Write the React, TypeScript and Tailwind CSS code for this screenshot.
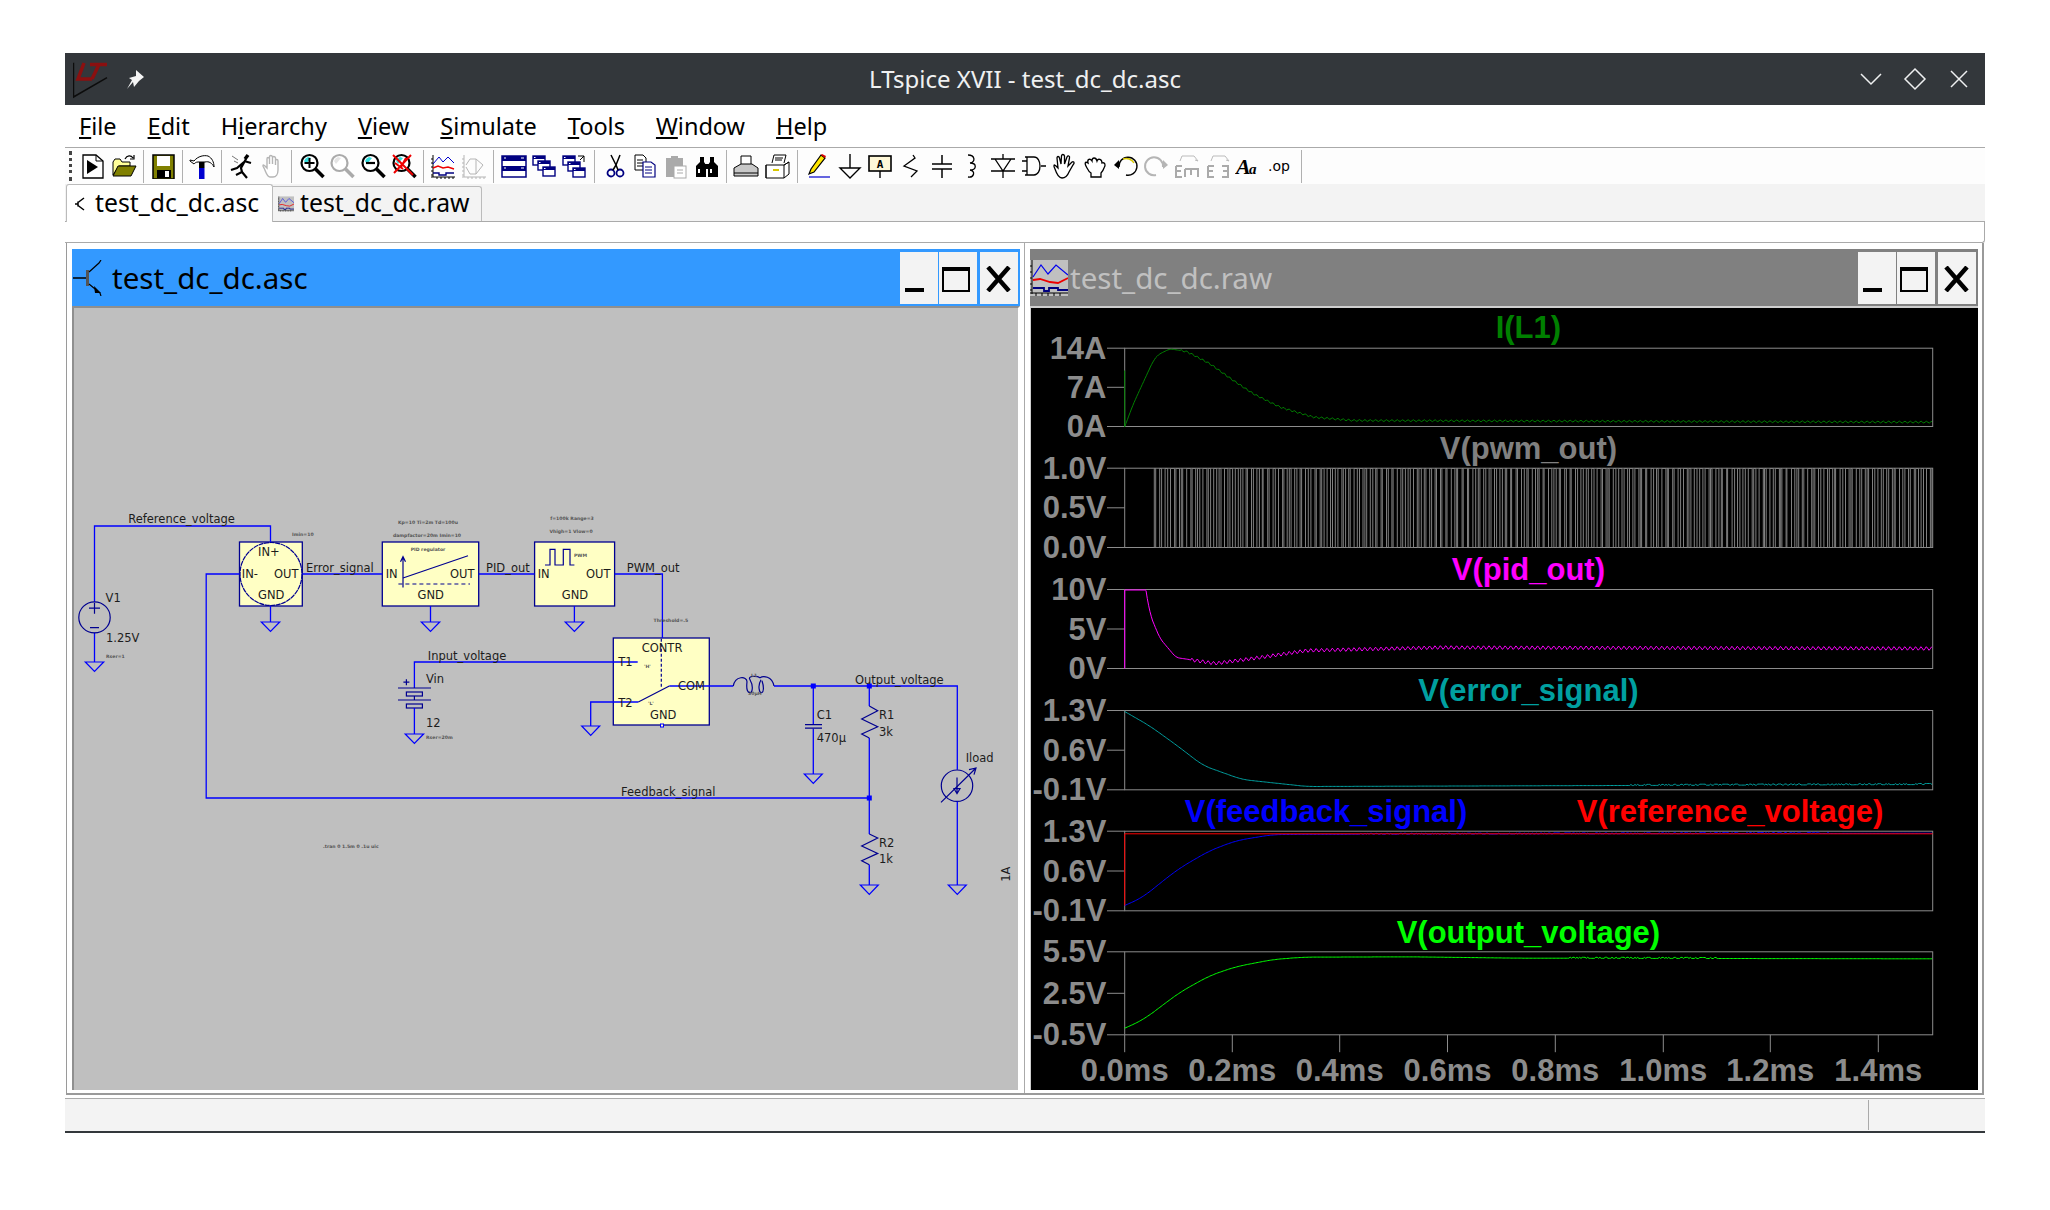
import React from "react";

const G = ({ x, y, w = 9.2 }: { x: number; y: number; w?: number }) => (
  <path d={`M${x - w} ${y}H${x + w}L${x} ${y + 9.4}Z`} fill="none" stroke="#0000ff" strokeWidth="1.2" />
);
const W = ({ d }: { d: string }) => <path d={d} fill="none" stroke="#0000ff" strokeWidth="1.3" />;
const N = ({ d, dash }: { d: string; dash?: string }) => (
  <path d={d} fill="none" stroke="#000090" strokeWidth="1.2" strokeDasharray={dash} />
);
const L = ({ x, y, t }: { x: number; y: number; t: string }) => (
  <text x={x} y={y} className="font-['DejaVu_Sans'] text-[11.5px] fill-[#1c1c1c]">{t}</text>
);
const Tiny = ({ x, y, t, c }: { x: number; y: number; t: string; c?: boolean }) => (
  <text x={x} y={y} textAnchor={c ? "middle" : "start"} className="font-['DejaVu_Sans'] text-[4.6px] font-bold fill-[#555555]">{t}</text>
);
const Dot = ({ x, y }: { x: number; y: number }) => <rect x={x - 2.5} y={y - 2.5} width="5" height="5" fill="#0000ff" />;
const Box = ({ x1, x2, y1, y2 }: { x1: number; x2: number; y1: number; y2: number }) => (
  <rect x={x1} y={y1} width={x2 - x1} height={y2 - y1} fill="#ffffc4" stroke="#000090" strokeWidth="1.3" />
);

function Schematic() {
  return (
    <svg width="944" height="782" viewBox="74 307.3 944 782" className="block">
      <Box x1={239.5} x2={302.3} y1={541.3} y2={605.3} />
      <Box x1={382.3} x2={478.7} y1={541.3} y2={605.3} />
      <Box x1={534.6} x2={614.6} y1={541.3} y2={605.3} />
      <Box x1={613.3} x2={709.3} y1={637.3} y2={724.3} />
      <W d="M94.5 601V525.3H270.5V541.3" />
      <W d="M94.5 632V661.3" />
      <G x={94.5} y={661.3} />
      <ellipse cx="94.5" cy="616.7" rx="15.7" ry="15.5" fill="none" stroke="#000090" strokeWidth="1.2" />
      <N d="M89 607.5H100M94.5 602V613M90 627H99" />
      <ellipse cx="271" cy="573.3" rx="31" ry="31.5" fill="none" stroke="#000090" strokeWidth="1.2" strokeDasharray="5 0.6" />
      <W d="M270.5 605.3V621.3" />
      <G x={270.5} y={621.3} />
      <W d="M239.5 573.3H206.2V797.3H869.3" />
      <W d="M302.3 573.3H382.3" />
      <W d="M430.5 605.3V621.3" />
      <G x={430.5} y={621.3} />
      <N d="M403 577.3L468 555" />
      <N d="M403 556V586.7M400.5 561L403 556L405.5 561" />
      <N d="M398.4 583.3H470" dash="4 3" />
      <W d="M478.7 573.3H534.6" />
      <W d="M574.4 605.3V621.3" />
      <G x={574.4} y={621.3} />
      <N d="M545 564.3H550V548.7H555V564.3H563.3V548.7H570V564.3H574.4" />
      <W d="M614.6 573.3H662.4V637.3" />
      <W d="M637.7 661.3H414.4V687.3" />
      <N d="M398 687.3H431M398 699.3H431M414.4 695.3V699.3" />
      <rect x="406.4" y="691.3" width="16" height="4" fill="none" stroke="#000090" strokeWidth="1.2" />
      <rect x="406.4" y="703.3" width="16" height="4" fill="none" stroke="#000090" strokeWidth="1.2" />
      <N d="M403.4 681.5H409.4M406.4 678.5V684.5" />
      <W d="M414.4 707.3V733.3" />
      <G x={414.4} y={733.3} />
      <N d="M661.3 638V686" dash="3 2" />
      <W d="M638.3 701.3H590.7V725.3" />
      <G x={590.7} y={725.3} w={9} />
      <N d="M638.3 701.3L669.3 685.3" />
      <W d="M669.3 685.3H733.3" />
      <rect x="660.5" y="723.3" width="3" height="3" fill="#ffffc4" stroke="#0000ff" />
      <N d="M733.3 685.3C735 675 747 675 747 681C746 690 748 692 750 692C752 692 754 686 750 679C747 675 757 675 760 677C763 675 772 675 774 685.3M761 679C757 686 760 692 761 692C764 692 764 686 762 680" />
      <W d="M774 685.3H957.3V769" />
      <Dot x={813.3} y={685.3} />
      <Dot x={869.3} y={685.3} />
      <Dot x={869.3} y={797.3} />
      <W d="M813.3 685.3V724M813.3 728V773.3" />
      <N d="M805 724H822M805 727.5H822" />
      <G x={813.3} y={773.3} w={9} />
      <W d="M869.3 685.3V705.3M869.3 737.3V833.3M869.3 864V884.3" />
      <N d="M869.3 705.3L877.7 710L861.7 718.3L877.7 726L861.7 733.3L869.3 737.3" />
      <N d="M869.3 833.3L877.7 837.3L861.7 845.3L877.7 852.7L861.7 860L869.3 864" />
      <G x={869.3} y={884.3} w={9} />
      <ellipse cx="957" cy="785" rx="15.7" ry="15.7" fill="none" stroke="#000090" strokeWidth="1.2" />
      <N d="M941 801.7L976 767.3M969 769L976 767.3L974 774" />
      <N d="M957 776.7V793M954 788H960L957 793Z" />
      <W d="M957.3 801V884.3" />
      <G x={957.3} y={884.3} w={9} />

      <L x={128.2} y={522.7} t="Reference_voltage" />
      <L x={105.6} y={601.7} t="V1" />
      <L x={106} y={641.7} t="1.25V" />
      <Tiny x={106} y={657} t="Rser=1" />
      <L x={258} y={555.7} t="IN+" />
      <L x={241.8} y={577.7} t="IN-" />
      <L x={274} y={577.7} t="OUT" />
      <L x={258} y={598.7} t="GND" />
      <Tiny x={292} y={535} t="Imin=10" />
      <L x={306} y={571} t="Error_signal" />
      <L x={385.7} y={577.7} t="IN" />
      <L x={450} y={577.7} t="OUT" />
      <L x={417.5} y={598.7} t="GND" />
      <Tiny c x={428} y={550} t="PID regulator" />
      <Tiny c x={428} y={523} t="Kp=10 Ti=2m Td=100u" />
      <Tiny c x={427} y={536} t="dampfactor=20m Imin=10" />
      <L x={486} y={571} t="PID_out" />
      <L x={537.7} y={577.7} t="IN" />
      <L x={586} y={577.7} t="OUT" />
      <L x={561.8} y={598.7} t="GND" />
      <Tiny x={574} y={556} t="PWM" />
      <Tiny c x={572} y={519} t="f=100k Range=3" />
      <Tiny c x={571} y={532} t="Vhigh=1 Vlow=0" />
      <L x={626.8} y={571} t="PWM_out" />
      <Tiny x={653.6} y={621} t="Threshold=.5" />
      <L x={427.8} y={659} t="Input_voltage" />
      <L x={426} y={682} t="Vin" />
      <L x={426} y={726} t="12" />
      <Tiny x={426} y={738} t="Rser=20m" />
      <L x={641.7} y={651.7} t="CONTR" />
      <L x={618.3} y={665.7} t="T1" />
      <L x={618.3} y={706} t="T2" />
      <L x={678} y={689.3} t="COM" />
      <L x={650} y={718.7} t="GND" />
      <Tiny x={644} y={667} t="'H'" />
      <Tiny x={648} y={704} t="'L'" />
      <Tiny x={751} y={676} t="L1" />
      <Tiny x={748} y={694} t="30µH" />
      <L x={855} y={683} t="Output_voltage" />
      <L x={621} y={795} t="Feedback_signal" />
      <L x={816.7} y={718} t="C1" />
      <L x={816.7} y={741.7} t="470µ" />
      <L x={879} y={718} t="R1" />
      <L x={879} y={735.7} t="3k" />
      <L x={879} y={846} t="R2" />
      <L x={879} y={862.7} t="1k" />
      <L x={965.7} y={761.7} t="Iload" />
      <Tiny x={323} y={847} t=".tran 0 1.5m 0 .1u uic" />
      <text x={1010} y={881} transform="rotate(-90 1010 881)" className="font-['DejaVu_Sans'] text-[11.5px] fill-[#1c1c1c]">1A</text>
    </svg>
  );
}

const noise = (i: number) => {
  const v = Math.sin(i * 12.9898) * 43758.5453;
  return v - Math.floor(v);
};
const interp = (p: number[][], x: number) => {
  if (x <= p[0][0]) return p[0][1];
  for (let i = 1; i < p.length; i++) {
    if (x <= p[i][0]) {
      const t = (x - p[i - 1][0]) / (p[i][0] - p[i - 1][0]);
      return p[i - 1][1] + t * (p[i][1] - p[i - 1][1]);
    }
  }
  return p[p.length - 1][1];
};
const curve = (p: number[][], rad: number, rip: (x: number, i: number) => number) => {
  let d = "";
  let i = 0;
  const x0 = p[0][0];
  for (let x = x0; x <= p[p.length - 1][0]; x += 1.35) {
    const r = Math.min(rad, x - x0);
    let s = 0;
    for (let k = -4; k <= 4; k++) s += interp(p, x + (k / 4) * r);
    d += `${i === 0 ? "M" : "L"}${x.toFixed(1)} ${(s / 9 + rip(x, i)).toFixed(1)}`;
    i++;
  }
  return d;
};
const tri = (x: number) => Math.sin((x * 2 * Math.PI) / 5.4);
const dash = (from: number, to: number) => (x: number, i: number) =>
  x > from && x < to && noise(i) > 0.6 ? -1 : 0;

const conv = (pts: number[][], oy: number) => pts.map(([a, b]) => [1020 + a / 3, oy + b / 3]);

const iL = conv([[314, 559], [340, 490], [370, 425], [400, 360], [415, 342], [450, 325], [500, 333], [570, 370], [640, 420], [700, 460], [780, 500], [880, 530], [1000, 540], [2738, 545]], 240);
const pid = [[1146, 590], [1150, 614], [1160, 638], [1176, 657], [1215, 663], [1260, 657], [1307, 650], [1440, 647], [1932.7, 648]];
const err = [[1124.7, 711], [1150, 725.6], [1177, 745], [1203, 765], [1242, 779], [1307, 786], [1932.7, 784]];
const fb = conv([[314, 375], [370, 350], [420, 308], [480, 262], [570, 210], [650, 180], [760, 162], [2738, 158]], 780);
const out = conv([[314, 743], [370, 718], [420, 680], [480, 635], [570, 585], [650, 558], [760, 537], [850, 530], [1170, 529], [1500, 533], [2738, 535]], 780);

let pwm = "M1154.3 547V468";
{
  let x = 1154.3;
  let i = 0;
  while (x < 1931) {
    const dty = 0.8 + noise(i + 7) * 3.4;
    pwm += `H${(x + dty).toFixed(1)}V547H${(x + 5.4).toFixed(1)}V468`;
    x += 5.4;
    i++;
  }
  pwm += "H1932";
}

const panes = [
  { top: 347.7, bot: 426, mid: 386.8, labels: ["14A", "7A", "0A"] },
  { top: 467.7, bot: 547, mid: 507.3, labels: ["1.0V", "0.5V", "0.0V"] },
  { top: 589, bot: 668, mid: 628.5, labels: ["10V", "5V", "0V"] },
  { top: 710, bot: 789.3, mid: 749.7, labels: ["1.3V", "0.6V", "-0.1V"] },
  { top: 830.7, bot: 910.3, mid: 870.5, labels: ["1.3V", "0.6V", "-0.1V"] },
  { top: 951.3, bot: 1034.3, mid: 992.8, labels: ["5.5V", "2.5V", "-0.5V"] },
];
const PT = "font-['Liberation_Sans'] text-[31px] font-bold";
const ticks = [
  [1124.7, "0.0ms"], [1232.3, "0.2ms"], [1339.7, "0.4ms"], [1447.5, "0.6ms"],
  [1555.3, "0.8ms"], [1663.3, "1.0ms"], [1770.3, "1.2ms"], [1878.3, "1.4ms"],
] as [number, string][];

function Plot() {
  return (
    <svg width="946" height="782" viewBox="1031 307.5 946 782" className="block">
      {panes.map((p, i) => (
        <g key={i}>
          <rect x="1124.7" y={p.top} width="808" height={p.bot - p.top} fill="none" stroke="#8c8c8c" strokeWidth="1" />
          {[p.top, p.mid, p.bot].map((y, j) => (
            <g key={j}>
              <line x1="1107" x2="1124.7" y1={y} y2={y} stroke="#8c8c8c" strokeWidth="1" />
              <text x="1106.5" y={y + 10.6} textAnchor="end" className={`${PT} fill-[#8c8c8c]`}>{p.labels[j]}</text>
            </g>
          ))}
        </g>
      ))}
      {ticks.map(([x, t]) => (
        <g key={t}>
          <line x1={x} x2={x} y1="1034.3" y2="1051.7" stroke="#8c8c8c" strokeWidth="1" />
          <text x={x} y="1080.5" textAnchor="middle" className={`${PT} fill-[#8c8c8c]`}>{t}</text>
        </g>
      ))}
      <text x="1528.4" y="337.7" textAnchor="middle" className={`${PT} fill-[#008000]`}>I(L1)</text>
      <text x="1528.4" y="458" textAnchor="middle" className={`${PT} fill-[#808080]`}>V(pwm_out)</text>
      <text x="1528.4" y="579.2" textAnchor="middle" className={`${PT} fill-[#ff00ff]`}>V(pid_out)</text>
      <text x="1528.4" y="700" textAnchor="middle" className={`${PT} fill-[#00a0a0]`}>V(error_signal)</text>
      <text x="1326" y="821.2" textAnchor="middle" className={`${PT} fill-[#0000ff]`}>V(feedback_signal)</text>
      <text x="1730" y="821.2" textAnchor="middle" className={`${PT} fill-[#ff0000]`}>V(reference_voltage)</text>
      <text x="1528.4" y="942.2" textAnchor="middle" className={`${PT} fill-[#00ff00]`}>V(output_voltage)</text>

      <path d="M1124.7 426V370" stroke="#008000" strokeWidth="1" />
      <path d={curve(iL, 3, (x) => (x > 1180 ? 0.9 * tri(x) : 0))} fill="none" stroke="#008000" strokeWidth="1" />
      <path d={pwm} fill="none" stroke="#808080" strokeWidth="1" />
      <path d="M1124.7 668V589.5H1146" fill="none" stroke="#ff00ff" strokeWidth="1" />
      <path d={curve(pid, 3, (x) => (x > 1190 ? 1.8 * tri(x) : 0))} fill="none" stroke="#ff00ff" strokeWidth="1" />
      <path d={curve(err, 8, dash(1630, 1933))} fill="none" stroke="#00a0a0" strokeWidth="1" />
      <path d={curve(fb, 10, dash(1360, 1830))} fill="none" stroke="#0000ff" strokeWidth="1" />
      <path d="M1124.7 905V833.3H1932.7" fill="none" stroke="#ff0000" strokeWidth="1" />
      <path d={curve(out, 10, dash(1570, 1716))} fill="none" stroke="#00ff00" strokeWidth="1" />
    </svg>
  );
}

const Ic = ({ children }: { children: React.ReactNode }) => (
  <div className="w-[30.7px] h-[36px] flex items-center justify-center shrink-0">
    <svg width="26" height="26" viewBox="0 0 26 26" fill="none">{children}</svg>
  </div>
);
const Sep = ({ w = "w-[9px]" }: { w?: string }) => (
  <div className={`${w} h-[36px] flex justify-center items-center shrink-0`}>
    <div className="w-px h-[33px] bg-[#b0b0b0]" />
  </div>
);
const Mag = ({ c = "#000", hl = "#33dddd", children }: { c?: string; hl?: string; children?: React.ReactNode }) => (
  <>
    <circle cx="10.5" cy="10" r="8" fill="#fff" stroke={c} strokeWidth="2.2" />
    <path d="M5 8A7 7 0 0 1 9 4L12 5L7 11Z" fill={hl} />
    <path d="M16.5 16L24.5 24" stroke={c} strokeWidth="3.6" />
    {children}
  </>
);
const TileW = ({ x, y, w = 12, h = 9 }: { x: number; y: number; w?: number; h?: number }) => (
  <>
    <rect x={x} y={y} width={w} height={h} fill="#fff" stroke="#000080" strokeWidth="1.4" />
    <rect x={x} y={y} width={w} height={3} fill="#000080" />
    <rect x={x + 1} y={y + 1} width={1.5} height={1} fill="#fff" />
  </>
);
const Axes = ({ c }: { c: string }) => (
  <path d="M3 2V24M1 24H25M1 6H3M1 10H3M1 14H3M1 18H3M1 22H3M7 24V26M11 24V26M15 24V26M19 24V26M23 24V26" stroke={c} strokeWidth="1" />
);
const Hand = ({ c = "#000", f = "#fff" }: { c?: string; f?: string }) => (
  <path d="M5 15C3 12 4 11 6 13L8 15V6C8 4 10 4 10.5 6V11V4C10.5 2 13 2 13.5 4V11V5C13.5 3 16 3 16.5 5V12V8C16.5 6 19 6 19 8V17C19 21 17 24 14 24H11C8 24 7 19 5 15Z" fill={f} stroke={c} strokeWidth="1.4" />
);

function Toolbar() {
  return (
    <div className="h-[36px] flex items-center bg-[#fdfdfd]">
      <div className="w-[13.15px] h-[36px] flex justify-end items-center shrink-0">
        <div className="w-[3px] h-[30px] mr-[6px] border-l-[3px] border-dotted border-[#444]" />
      </div>
      <Ic><path d="M3 2H16L23 8V25H3Z" fill="#fff" stroke="#000" strokeWidth="1.3" /><path d="M16 2V8H23" stroke="#000" /><path d="M7 7L18 14L7 21Z" fill="#000" /></Ic>
      <Ic>
        <path d="M2 22V9L4 6H9L11 9H19V13H8L2 22Z" fill="#ffff99" stroke="#000" />
        <path d="M7 13H25L20 23H2Z" fill="#808000" stroke="#000" />
        <path d="M14 6C16 2 20 2 22 5M23 2V6H19" stroke="#000" strokeWidth="1.2" />
      </Ic>
      <Sep w="w-[8.3px]" />
      <Ic>
        <rect x="3" y="2" width="21" height="24" fill="#808000" stroke="#000" strokeWidth="1.5" />
        <rect x="7" y="3" width="13" height="10" fill="#fff" />
        <rect x="7" y="17" width="14" height="8" fill="#000" />
        <rect x="15" y="18" width="4" height="6" fill="#fff" />
      </Ic>
      <Sep w="w-[8.3px]" />
      <Ic>
        <path d="M1 7L5 8C9 3 15 2 19 3C23 5 25 9 25 14C23 10 20 8 16 9H9C7 9 6 10 5 11L1 8Z" fill="#fff" stroke="#000" strokeWidth="1" />
        <rect x="10" y="9" width="5.5" height="6" fill="#000" />
        <rect x="10" y="15" width="5.5" height="11" fill="#0000d0" />
      </Ic>
      <Sep w="w-[8.3px]" />
      <Ic>
        <path d="M20 2L17 6" stroke="#000" strokeWidth="3.5" />
        <path d="M18 6L13 15L14 19L8 22M14 19L19 25M16 8L23 10M16 9L9 15L3 17" stroke="#000" strokeWidth="2.2" />
        <path d="M4 3L10 7M6 8L10 10" stroke="#777" strokeWidth="1" />
      </Ic>
      <Ic><Hand c="#b5b5b5" /></Ic>
      <Sep />
      <Ic><Mag><path d="M5.5 10H15.5M10.5 5V15" stroke="#000" strokeWidth="2" /></Mag></Ic>
      <Ic><Mag c="#aaaaaa" hl="#e4e4e4" /></Ic>
      <Ic><Mag><path d="M6 10H15" stroke="#000" strokeWidth="2.2" /></Mag></Ic>
      <Ic><Mag><path d="M2 2L22 22M20 2L3 20M4 10L12 16M15 5L10 14" stroke="#ee0000" strokeWidth="2" /></Mag></Ic>
      <Sep />
      <Ic>
        <Axes c="#000" />
        <path d="M3 11L9 4L13 9L18 4L24 10" stroke="#0000cc" />
        <path d="M3 15L8 13L13 15L18 14L24 16" stroke="#ee0000" strokeWidth="1.4" />
        <path d="M3 20H9V22H16V20H24" stroke="#000080" strokeWidth="1.4" />
      </Ic>
      <Ic>
        <Axes c="#b5b5b5" />
        <path d="M5 12L9 6H15L22 12L15 21H9L5 14M15 6V21" stroke="#b5b5b5" />
      </Ic>
      <Sep />
      <Ic>
        <rect x="1" y="3" width="24" height="21" fill="#fff" stroke="#000080" strokeWidth="1.5" />
        <rect x="1" y="3" width="24" height="5" fill="#000080" />
        <rect x="1" y="13" width="24" height="5" fill="#000080" />
        <path d="M3 5H5M3 15H5M20 5H23M20 15H23" stroke="#fff" />
      </Ic>
      <Ic>
        <TileW x={2} y={3} />
        <TileW x={7} y={8} />
        <TileW x={12} y={14} />
      </Ic>
      <Ic>
        <TileW x={1} y={3} />
        <TileW x={6} y={9} />
        <TileW x={11} y={15} />
        <path d="M22 9V3H16M22 3L18 7" stroke="#000" />
      </Ic>
      <Sep />
      <Ic>
        <path d="M9 2L14 12L18 2" stroke="#000" strokeWidth="1.5" />
        <circle cx="9" cy="20" r="3.5" stroke="#000080" strokeWidth="1.8" />
        <circle cx="18" cy="20" r="3.5" stroke="#000080" strokeWidth="1.8" />
        <path d="M11 17L14 12L16 17" stroke="#000" strokeWidth="1.5" />
      </Ic>
      <Ic>
        <path d="M3 2H11L14 5V17H3Z" fill="#fff" stroke="#000" />
        <path d="M5 7H11M5 10H11M5 13H11" stroke="#000" />
        <path d="M11 9H19L23 12V24H11Z" fill="#fff" stroke="#000080" strokeWidth="1.2" />
        <path d="M13 14H20M13 17H20M13 20H20" stroke="#000080" />
      </Ic>
      <Ic>
        <path d="M3 5H8V3H15V5H20V24H3Z" fill="#aaaaaa" />
        <rect x="11" y="13" width="12" height="12" fill="#fff" stroke="#aaa" />
        <path d="M14 17H20M14 20H20" stroke="#aaa" />
      </Ic>
      <Ic>
        <path d="M6 4H10V9L12 12V24H2V13L6 9ZM16 4H20V9L24 13V24H14V12L16 9Z" fill="#000" />
        <rect x="11" y="11" width="4" height="5" fill="#000" />
        <path d="M5 16V20M17 16V20" stroke="#fff" strokeWidth="2" />
      </Ic>
      <Sep />
      <Ic>
        <path d="M8 11V3H18V11" fill="#fff" stroke="#000" />
        <path d="M8 11H19L25 15V23H1V15Z" fill="#c8c8c8" stroke="#000" />
        <path d="M1 20H25" stroke="#000" />
      </Ic>
      <Ic>
        <path d="M8 10L10 2H22L20 10" fill="#fff" stroke="#000" />
        <path d="M11 5H19M11 7H18" stroke="#000" />
        <path d="M2 12H20L25 9V21L20 25H2Z" fill="#fff" stroke="#000" />
        <path d="M2 12V25M20 12V25M20 12L25 9" stroke="#000" />
        <rect x="9" y="16" width="6" height="2" fill="#d8c800" />
      </Ic>
      <Sep w="w-[11px]" />
      <Ic>
        <path d="M3 21L5 16L15 2L19 5L8 19Z" fill="#ffe600" stroke="#000" strokeWidth="1.2" />
        <path d="M15 2L16 1L20 3L19 5Z" fill="#e00000" />
        <path d="M3 24H24" stroke="#0000cc" strokeWidth="1.2" />
      </Ic>
      <Ic><path d="M13 1V15M3 15H23L13 25Z" stroke="#000" strokeWidth="1.4" /></Ic>
      <Ic>
        <rect x="2" y="3" width="22" height="15" fill="#fff8d8" stroke="#000" strokeWidth="1.6" />
        <path d="M13 18V25" stroke="#000" strokeWidth="1.4" />
        <text x="13" y="15" textAnchor="middle" className="font-['DejaVu_Sans_Mono'] text-[11px] font-bold fill-black">A</text>
      </Ic>
      <Ic><path d="M15 2L17 5L6 13L19 18L13 24" stroke="#000" strokeWidth="1.3" /></Ic>
      <Ic><path d="M13 2V11M3 11H23M3 16H23M13 16V25" stroke="#000" strokeWidth="1.5" /></Ic>
      <Ic><path d="M9 2C16 2 17 9 11 10M11 10C18 10 18 17 11 17M11 17C17 18 15 25 9 24" stroke="#000" strokeWidth="1.3" /></Ic>
      <Ic><path d="M1 6H25M5 6L13 18L21 6M1 18H25M13 1V6M13 18V25" stroke="#000" strokeWidth="1.3" /></Ic>
      <Ic><path d="M1 8H6M1 18H6M6 4V22H13C21 22 21 4 13 4ZM20 13H25M4 4H6M4 22H6" stroke="#000" strokeWidth="1.3" /></Ic>
      <Ic>
        <path d="M4 16C2 12 3 11 5 13L7 15L6 5C6 3 8 3 8.5 5L10 11L10.5 3C10.5 1 13 1 13.5 3V11L16 4C17 2 19 3 18.5 5L17 13L21 9C23 8 24 10 22 12L18 19C16 24 14 25 11 25C8 25 6 22 4 16Z" fill="#fff" stroke="#000" strokeWidth="1.3" />
      </Ic>
      <Ic>
        <path d="M5 15C2 10 3 8 6 10C5 6 8 5 10 8C10 4 14 4 15 8C16 5 20 6 20 10C23 9 24 12 22 15C21 18 20 19 19 20V24H9V20C7 19 6 17 5 15Z" fill="#fff" stroke="#000" strokeWidth="1.3" />
      </Ic>
      <Ic>
        <path d="M6 14A9 9 0 1 1 13 22" stroke="#000" strokeWidth="1.4" />
        <path d="M10 6A9 9 0 0 1 21 10" stroke="#d8c800" strokeWidth="1.5" />
        <path d="M1 12L6 7V16Z" fill="#000" />
      </Ic>
      <Ic>
        <path d="M20 14A9 9 0 1 0 13 22" stroke="#b5b5b5" strokeWidth="2" />
        <path d="M25 12L20 7V16Z" fill="#b5b5b5" />
      </Ic>
      <Ic>
        <path d="M2 13H8M2 13V24H8M2 18H7M11 16V24M11 16H24V24M17 16V22" stroke="#aaa" strokeWidth="2" />
        <path d="M6 8L8 3H20L24 8M24 8L21 7" stroke="#bbb" />
      </Ic>
      <Ic>
        <path d="M3 13H9M3 13V24H9M3 18H8M17 13H23V24H17M18 18H23" stroke="#aaa" strokeWidth="2" />
        <path d="M6 8L8 3H20L24 8M24 8L21 7" stroke="#bbb" />
      </Ic>
      <Ic>
        <text x="1" y="21" className="font-['Liberation_Serif'] italic font-bold text-[22px] fill-black">A</text>
        <text x="14" y="21" className="font-['Liberation_Serif'] italic font-bold text-[15px] fill-black">a</text>
      </Ic>
      <Ic>
        <text x="13" y="18" textAnchor="middle" className="font-['DejaVu_Sans'] text-[14px] fill-black">.op</text>
      </Ic>
      <div className="w-[3px] shrink-0" />
      <Sep />
    </div>
  );
}

const Mi = ({ u, pre, post }: { u: string; pre?: string; post: string }) => (
  <span className="whitespace-nowrap">{pre}<u className="underline-offset-2">{u}</u>{post}</span>
);

const WinBtns = () => (
  <div className="flex items-stretch h-[52px] ml-auto mr-[2.5px] shrink-0">
    <div className="w-[38px] bg-[#f3f3f3] flex items-end pl-[5px] pb-[12px]"><div className="w-[19px] h-[4px] bg-black" /></div>
    <div className="w-[38px] ml-px bg-[#f3f3f3] flex items-center pl-[3px]">
      <div className="w-[28px] h-[25px] mt-[3px] border-2 border-t-4 border-black" />
    </div>
    <div className="w-[38px] ml-[3px] bg-[#f3f3f3] flex items-center justify-center">
      <svg width="25" height="26" viewBox="0 0 25 26" className="mt-[3px]"><path d="M2 1L23 25M23 1L2 25" stroke="#000" strokeWidth="4.5" /></svg>
    </div>
  </div>
);
const RawIcon = ({ w, h }: { w: number; h: number }) => (
  <svg width={w} height={h} viewBox="0 0 38 36" className="shrink-0">
    <rect width="38" height="36" fill="#c0c0c0" />
    <path d="M2 0V34M0 33H38M0 6H2M0 12H2M0 18H2M0 24H2M0 30H2M6 33V36M12 33V36M18 33V36M24 33V36M30 33V36" stroke="#000" />
    <path d="M3 17L11 5L18 14L26 5L38 15" stroke="#0000ee" strokeWidth="1.2" fill="none" />
    <path d="M3 20L10 19L20 22L28 23L38 18" stroke="#ee0000" strokeWidth="1.8" fill="none" />
    <path d="M3 28H14V31H19V28H28V30H38" stroke="#000080" strokeWidth="1.8" fill="none" />
  </svg>
);

export default function App() {
  return (
    <div className="w-[2050px] h-[1210px] bg-white pt-[53px] pl-[65px] font-['Noto_Sans',sans-serif]">
      <div className="w-[1920px] h-[1080px] flex flex-col">
        <div className="h-[52px] bg-[#33373b] grid grid-cols-[1fr_auto_1fr] items-center shrink-0">
          <div className="flex items-center">
            <svg width="36" height="40" viewBox="0 0 36 40" className="ml-[8px]">
              <path d="M.5 3.7V38L34 18.7" fill="none" stroke="#0c0c0c" strokeWidth="1.5" />
              <path d="M11 4L5 20H19M17 5.5H34M26 5.5L19 20" fill="none" stroke="#8b1010" strokeWidth="3.5" />
            </svg>
            <svg width="24" height="24" viewBox="0 0 24 24" className="ml-[15px]">
              <path d="M12 3L20 10L15 14L10 20L9 15L3 22L8 13L5 11L12 9Z" fill="#f5f5f5" />
            </svg>
          </div>
          <div className="text-[#eff0f1] text-[24px] whitespace-nowrap">LTspice XVII - test_dc_dc.asc</div>
          <div className="flex justify-end items-center gap-[20px] pr-[14px]">
            <svg width="24" height="24" viewBox="0 0 24 24"><path d="M2 7L12 17L22 7" fill="none" stroke="#eff0f1" strokeWidth="1.5" /></svg>
            <svg width="24" height="24" viewBox="0 0 24 24"><path d="M12 2L22 12L12 22L2 12Z" fill="none" stroke="#eff0f1" strokeWidth="1.5" /></svg>
            <svg width="24" height="24" viewBox="0 0 24 24"><path d="M4 4L20 20M20 4L4 20" fill="none" stroke="#eff0f1" strokeWidth="1.5" /></svg>
          </div>
        </div>

        <div className="h-[43px] shrink-0 border-b border-[#aaaaaa] flex items-center pl-[14px] pt-[2px] text-[23.5px] text-black bg-white">
          <div className="flex gap-[31px]">
            <Mi u="F" post="ile" />
            <Mi u="E" post="dit" />
            <Mi pre="H" u="i" post="erarchy" />
            <Mi u="V" post="iew" />
            <Mi u="S" post="imulate" />
            <Mi u="T" post="ools" />
            <Mi u="W" post="indow" />
            <Mi u="H" post="elp" />
          </div>
        </div>

        <Toolbar />

        <div className="h-[38px] shrink-0 bg-[#f3f3f3] border-b border-[#aaaaaa] flex items-start text-[24.75px] text-black">
          <div className="ml-px w-[207px] h-[38px] bg-white border border-b-0 border-[#bbbbbb] rounded-t-[3px] flex items-center pl-[8px] gap-[9px]">
            <svg width="11" height="16" viewBox="0 0 11 16" className="shrink-0"><path d="M0 8H3M3 5.5V10.5M3 6.5L9 2M3 9.5L9 14" stroke="#000" strokeWidth="1.5" fill="none" /></svg>
            <span className="-mt-[2px]">test_dc_dc.asc</span>
          </div>
          <div className="mt-[2px] w-[209px] h-[35px] border-t border-r border-[#bbbbbb] rounded-tr-[3px] flex items-center pl-[5px] gap-[6px]">
            <RawIcon w={16} h={16} />
            <span className="-mt-[2px]">test_dc_dc.raw</span>
          </div>
        </div>

        <div className="h-[21px] shrink-0 bg-white border-r border-b border-[#aaaaaa] rounded-br-[3px]" />

        <div className="ml-px w-[1918px] h-[852px] shrink-0 flex border-l border-r-2 border-b-2 border-[#9a9a9a] bg-white">
          <div className="w-[958px] h-full pl-[5px] pt-[6px] flex flex-col border-r border-[#aaaaaa]">
            <div className="w-[948px] h-[57px] bg-[#3399ff] flex items-center shrink-0">
              <svg width="30" height="36" viewBox="0 0 30 36" className="ml-[1px] shrink-0">
                <path d="M0 18H13M14 10V26" stroke="#000" strokeWidth="1.3" />
                <rect x="13" y="10" width="3" height="16" fill="#555" />
                <path d="M16 12L26 3L28 0M16 24L27 33L28 36" stroke="#000" strokeWidth="1.2" fill="none" />
                <path d="M21 26L28 33L22 33Z" fill="#000" />
              </svg>
              <span className="ml-[9px] text-[29.5px] leading-[57px] text-black whitespace-nowrap">test_dc_dc.asc</span>
              <WinBtns />
            </div>
            <div className="w-[948px] h-[784px] border-l-2 border-t-2 border-r-2 border-[#8f8f8f] border-r-white bg-[#bfbfbf] overflow-hidden">
              <Schematic />
            </div>
          </div>
          <div className="w-[957px] h-full pl-[5px] pt-[6px] flex flex-col">
            <div className="w-[948px] h-[57px] bg-[#808080] flex items-center shrink-0">
              <RawIcon w={38} h={36} />
              <span className="ml-[2px] text-[29.5px] leading-[57px] text-[#c0c0c0] whitespace-nowrap">test_dc_dc.raw</span>
              <WinBtns />
            </div>
            <div className="w-[948px] h-[784px] border-t-2 border-l border-[#cfcfcf] bg-black overflow-hidden">
              <Plot />
            </div>
          </div>
        </div>

        <div className="mt-[3px] flex-1 bg-[#f3f3f3] border-t border-b-2 border-t-[#aaaaaa] border-b-[#33373b] flex justify-end">
          <div className="w-[117px] my-[1px] border-l border-[#aaaaaa]" />
        </div>
      </div>
    </div>
  );
}
